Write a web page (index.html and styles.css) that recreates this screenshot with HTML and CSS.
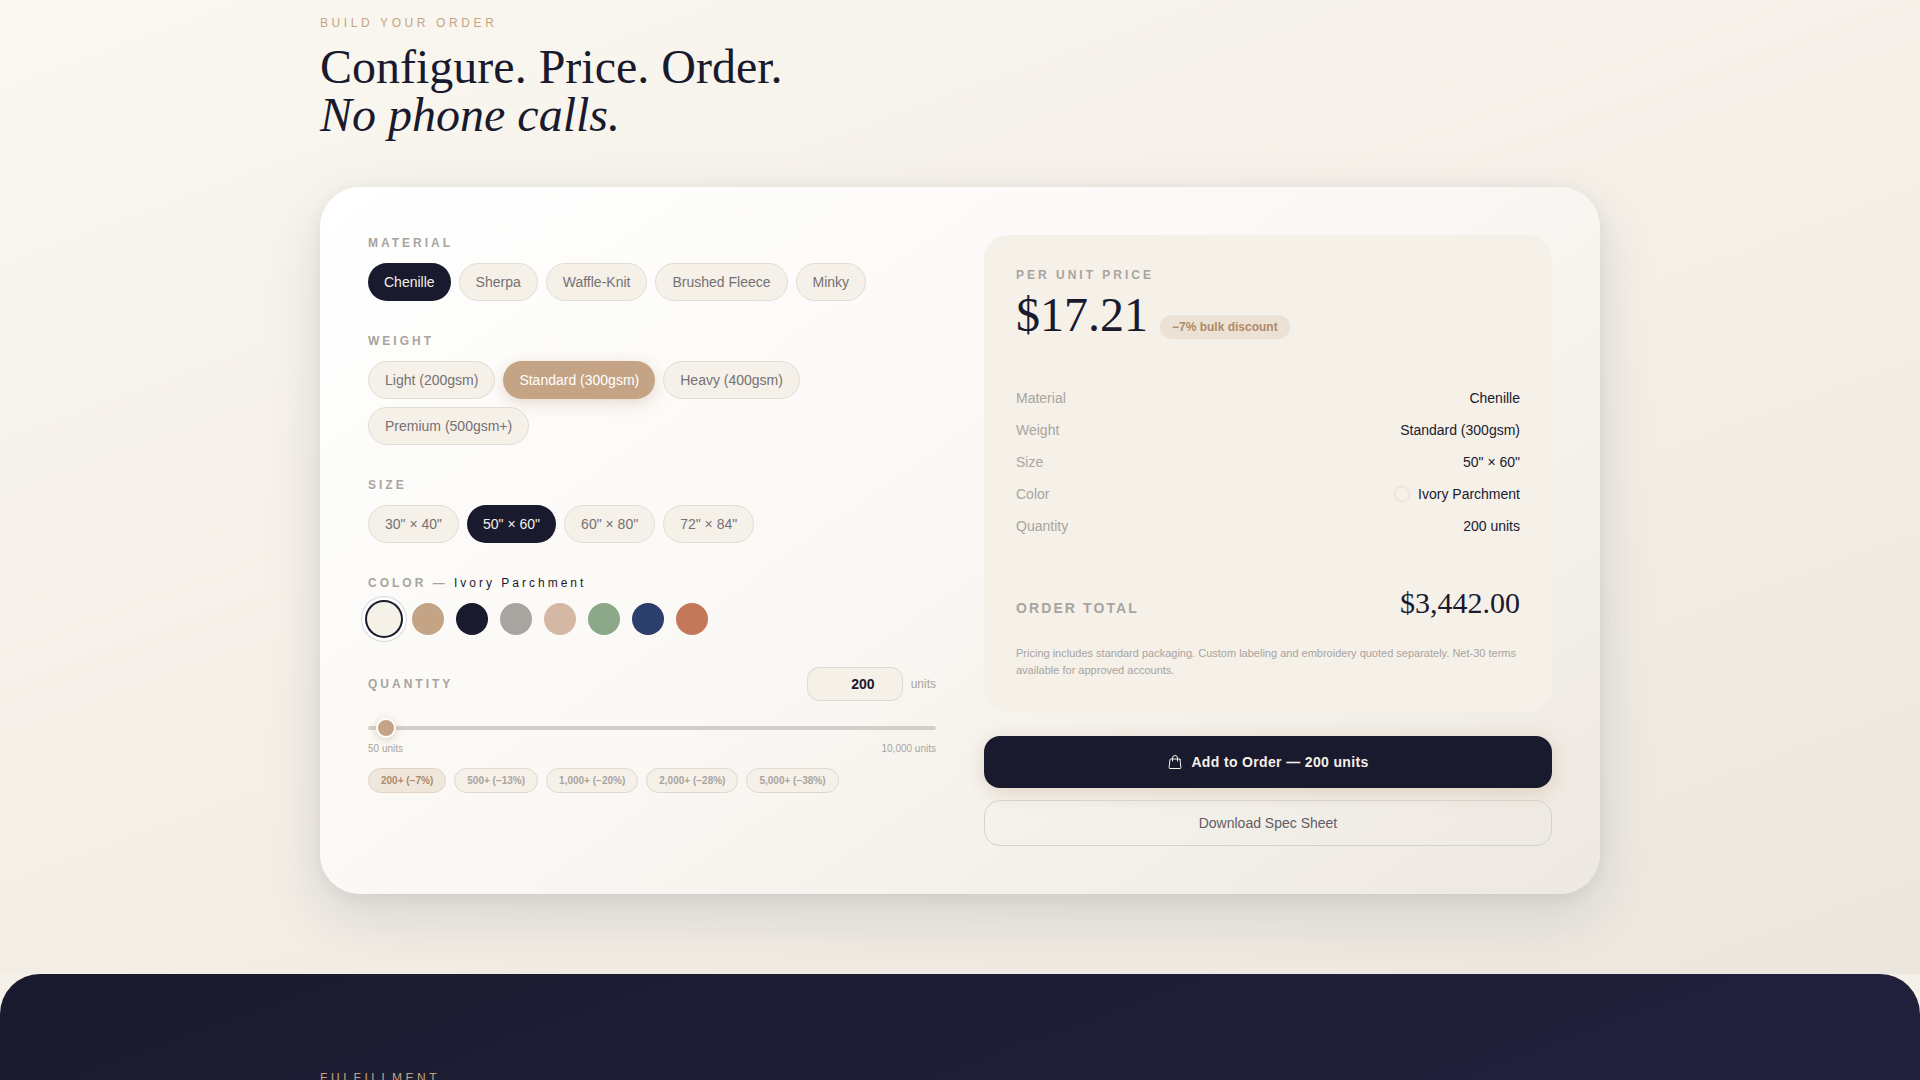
FILE: index.html
```html
<!DOCTYPE html>
<html lang="en">
<head>
  <meta charset="UTF-8">
  <meta name="viewport" content="width=device-width, initial-scale=1.0">
  <title>Build Your Order</title>
  <link rel="stylesheet" href="styles.css">
</head>
<body>
  <section class="builder">
    <div class="container">
      <p class="eyebrow">BUILD YOUR ORDER</p>
      <h2 class="title">Configure. Price. Order.<br><em>No phone calls.</em></h2>

      <div class="card">
        <!-- Options -->
        <div class="options">
          <div class="group">
            <h3 class="label">MATERIAL</h3>
            <div class="chips">
              <button type="button" class="chip dark">Chenille</button>
              <button type="button" class="chip">Sherpa</button>
              <button type="button" class="chip">Waffle-Knit</button>
              <button type="button" class="chip">Brushed Fleece</button>
              <button type="button" class="chip">Minky</button>
            </div>
          </div>

          <div class="group">
            <h3 class="label">WEIGHT</h3>
            <div class="chips">
              <button type="button" class="chip">Light (200gsm)</button>
              <button type="button" class="chip tan">Standard (300gsm)</button>
              <button type="button" class="chip">Heavy (400gsm)</button>
              <button type="button" class="chip">Premium (500gsm+)</button>
            </div>
          </div>

          <div class="group">
            <h3 class="label">SIZE</h3>
            <div class="chips">
              <button type="button" class="chip">30" × 40"</button>
              <button type="button" class="chip dark">50" × 60"</button>
              <button type="button" class="chip">60" × 80"</button>
              <button type="button" class="chip">72" × 84"</button>
            </div>
          </div>

          <div class="group">
            <h3 class="label">COLOR — <span class="label-value">Ivory Parchment</span></h3>
            <div class="swatches">
              <button type="button" class="swatch ivory selected" aria-label="Ivory Parchment"></button>
              <button type="button" class="swatch camel" aria-label="Camel"></button>
              <button type="button" class="swatch midnight" aria-label="Midnight"></button>
              <button type="button" class="swatch stone" aria-label="Stone"></button>
              <button type="button" class="swatch blush" aria-label="Blush"></button>
              <button type="button" class="swatch sage" aria-label="Sage"></button>
              <button type="button" class="swatch navy" aria-label="Navy"></button>
              <button type="button" class="swatch terracotta" aria-label="Terracotta"></button>
            </div>
          </div>

          <div class="group">
            <div class="quantity-row">
              <label class="label" for="quantity">QUANTITY</label>
              <div class="quantity-box">
                <input type="number" id="quantity" class="quantity-input" min="50" max="10000" value="200">
                <span class="units">units</span>
              </div>
            </div>
            <input type="range" class="slider" aria-label="Quantity" min="50" max="10000" step="50" value="200">
            <div class="range-labels">
              <span>50 units</span>
              <span>10,000 units</span>
            </div>
            <div class="tiers">
              <button type="button" class="tier active">200+ (−7%)</button>
              <button type="button" class="tier">500+ (−13%)</button>
              <button type="button" class="tier">1,000+ (−20%)</button>
              <button type="button" class="tier">2,000+ (−28%)</button>
              <button type="button" class="tier">5,000+ (−38%)</button>
            </div>
          </div>
        </div>

        <!-- Price summary -->
        <div class="checkout">
          <div class="summary">
            <h3 class="label">PER UNIT PRICE</h3>
            <div class="price-row">
              <span class="price">$17.21</span>
              <span class="discount">−7% bulk discount</span>
            </div>

            <dl class="details">
              <div class="detail"><dt>Material</dt><dd>Chenille</dd></div>
              <div class="detail"><dt>Weight</dt><dd>Standard (300gsm)</dd></div>
              <div class="detail"><dt>Size</dt><dd>50" × 60"</dd></div>
              <div class="detail"><dt>Color</dt><dd><span class="dot"></span>Ivory Parchment</dd></div>
              <div class="detail"><dt>Quantity</dt><dd>200 units</dd></div>
            </dl>

            <div class="total-row">
              <span class="total-label">ORDER TOTAL</span>
              <span class="total">$3,442.00</span>
            </div>
            <p class="note">Pricing includes standard packaging. Custom labeling and embroidery quoted separately. Net-30 terms available for approved accounts.</p>
          </div>

          <div class="actions">
            <button type="button" class="btn btn-primary">
              <svg width="16" height="16" viewBox="0 0 24 24" fill="none" stroke="currentColor" stroke-width="1.5" stroke-linejoin="round" stroke-linecap="round" aria-hidden="true">
                <path d="M15.75 10.5V6a3.75 3.75 0 1 0-7.5 0v4.5m11.356-1.993 1.263 12c.07.665-.45 1.243-1.119 1.243H4.25a1.125 1.125 0 0 1-1.12-1.243l1.264-12A1.125 1.125 0 0 1 5.513 7.5h12.974c.576 0 1.059.435 1.119 1.007z"/>
              </svg>
              Add to Order — 200 units
            </button>
            <button type="button" class="btn btn-outline">Download Spec Sheet</button>
          </div>
        </div>
      </div>
    </div>
  </section>

  <section class="fulfillment">
    <div class="container">
      <p class="eyebrow">FULFILLMENT</p>
    </div>
  </section>
</body>
</html>
```
FILE: styles.css
```css
* {
  margin: 0;
  padding: 0;
  box-sizing: border-box;
}

body {
  display: flex;
  flex-direction: column;
  height: 100vh;
  overflow: hidden;
  background: #f5f0e8;
  color: #1a1a2e;
  font-family: "Liberation Sans", Arial, sans-serif;
  font-size: 14px;
  line-height: 20px;
}

button,
input {
  font: inherit;
  color: inherit;
}

button {
  border: none;
  cursor: pointer;
}

.container {
  max-width: 1280px;
  margin: 0 auto;
}

/* Builder section */
.builder {
  flex: none;
  padding: 15px 32px 80px;
  background: linear-gradient(160deg, #faf8f1 0%, #f5f0e8 45%, #ebe7df 100%);
}

.eyebrow {
  margin-bottom: 12px;
  font-size: 12px;
  line-height: 16px;
  letter-spacing: 0.3em;
  color: #c4a484;
}

.title {
  margin-bottom: 48px;
  font-family: "Liberation Serif", "Times New Roman", serif;
  font-size: 48px;
  font-weight: 400;
  line-height: 48px;
}

.card {
  display: grid;
  grid-template-columns: 1fr 1fr;
  gap: 48px;
  padding: 48px;
  border-radius: 40px;
  background: linear-gradient(145deg, #ffffff 0%, #faf8f4 50%, #ede8e0 100%);
  box-shadow: 0 20px 60px rgba(26, 26, 46, 0.12), 0 4px 16px rgba(26, 26, 46, 0.06);
}

/* Options */
.options {
  display: flex;
  flex-direction: column;
  gap: 32px;
}

.label {
  font-size: 12px;
  font-weight: 700;
  line-height: 16px;
  letter-spacing: 3px;
  color: #a8a4a0;
}

.label-value {
  font-weight: 400;
  color: #1a1a2e;
}

.chips {
  display: flex;
  flex-wrap: wrap;
  gap: 8px;
  margin-top: 12px;
}

.chip {
  padding: 8px 16px;
  border: 1px solid #e2ddd5;
  border-radius: 19px;
  background: #f5f0e8;
  color: #757173;
}

.chip.dark {
  border: none;
  background: #1a1a2e;
  color: #f5f0e8;
}

.chip.tan {
  border: none;
  background: #c4a484;
  color: #ffffff;
  box-shadow: 0 4px 16px rgba(196, 164, 132, 0.4);
}

/* Color swatches */
.swatches {
  display: flex;
  gap: 12px;
  margin-top: 12px;
}

.swatch {
  width: 32px;
  height: 32px;
  border-radius: 50%;
}

.swatch.selected {
  box-shadow: 0 0 0 1px #f5f0e8, 0 0 0 3px #1a1a2e, 0 0 0 6px #ffffff, 0 0 0 7px #d8d6dc;
}

.ivory { background: #f5f0e8; }
.camel { background: #c4a484; }
.midnight { background: #1a1a2e; }
.stone { background: #a8a4a0; }
.blush { background: #d4b8a4; }
.sage { background: #8ba888; }
.navy { background: #2c3e6b; }
.terracotta { background: #c4785a; }

/* Quantity */
.quantity-row {
  display: flex;
  align-items: center;
  justify-content: space-between;
}

.quantity-box {
  display: flex;
  align-items: center;
  gap: 8px;
}

.quantity-input {
  width: 96px;
  height: 34px;
  padding: 6px 12px;
  border: 1px solid #ddd8d0;
  border-radius: 12px;
  background: #f5f0e8;
  font-weight: 700;
  text-align: right;
}

.units {
  font-size: 12px;
  line-height: 16px;
  color: #a8a4a0;
}

.slider {
  -webkit-appearance: none;
  appearance: none;
  display: block;
  width: 100%;
  height: 4px;
  margin-top: 25px;
  border-radius: 2px;
  background: #d1cfc9;
}

.slider::-webkit-slider-thumb {
  -webkit-appearance: none;
  width: 20px;
  height: 20px;
  border: 2px solid #ffffff;
  border-radius: 50%;
  background: #c4a484;
  box-shadow: 0 2px 8px rgba(196, 164, 132, 0.5);
}

.range-labels {
  display: flex;
  justify-content: space-between;
  margin-top: 11px;
  font-size: 10px;
  line-height: 15px;
  color: #a8a4a0;
}

.tiers {
  display: flex;
  flex-wrap: wrap;
  gap: 8px;
  margin-top: 12px;
}

.tier {
  padding: 4px 12px;
  border: 1px solid #ddd8d0;
  border-radius: 13px;
  background: #f5f0e8;
  font-size: 10px;
  font-weight: 700;
  line-height: 15px;
  color: #a8a4a0;
}

.tier.active {
  border-color: #e2d3c4;
  background: #efe6dc;
  color: #b08968;
}

/* Summary */
.summary {
  padding: 32px 32px 33px;
  border-radius: 24px;
  background: #f5f0e8;
}

.price-row {
  display: flex;
  align-items: flex-end;
  gap: 12px;
  margin-top: 8px;
}

.price {
  font-family: "Liberation Serif", "Times New Roman", serif;
  font-size: 48px;
  line-height: 48px;
}

.discount {
  padding: 4px 12px;
  border-radius: 12px;
  background: #ebe1d4;
  font-size: 12px;
  font-weight: 700;
  line-height: 16px;
  color: #b08968;
}

.details {
  display: flex;
  flex-direction: column;
  gap: 12px;
  margin: 24px 0;
  padding: 24px 0;
  border: solid #f5f0e8;
  border-width: 1px 0;
}

.detail {
  display: flex;
  justify-content: space-between;
}

.detail dt {
  color: #a8a4a0;
}

.detail dd {
  display: flex;
  align-items: center;
  gap: 8px;
}

.dot {
  width: 16px;
  height: 16px;
  border: 1px solid #e2ddd5;
  border-radius: 50%;
  background: #f5f0e8;
}

.total-row {
  display: flex;
  align-items: baseline;
  justify-content: space-between;
}

.total-label {
  font-weight: 700;
  letter-spacing: 0.15em;
  color: #a8a4a0;
}

.total {
  font-family: "Liberation Serif", "Times New Roman", serif;
  font-size: 30px;
  line-height: 36px;
}

.note {
  margin-top: 24px;
  font-size: 11px;
  line-height: 17px;
  color: #a8a4a0;
}

/* Actions */
.actions {
  display: flex;
  flex-direction: column;
  gap: 12px;
  margin-top: 24px;
}

.btn {
  display: flex;
  align-items: center;
  justify-content: center;
  gap: 8px;
  border-radius: 16px;
}

.btn-primary {
  padding: 16px;
  background: #1a1a2e;
  color: #f5f0e8;
  font-weight: 700;
  letter-spacing: 0.025em;
  box-shadow: 0 4px 20px rgba(196, 164, 132, 0.4);
}

.btn-outline {
  padding: 12px;
  border: 1px solid #d5d1cb;
  background: transparent;
  color: #5f5d66;
}

/* Fulfillment section */
.fulfillment {
  flex: 1;
  padding: 96px 32px 0;
  border-radius: 40px 40px 0 0;
  background: linear-gradient(160deg, #1a1a2e 0%, #23223e 100%);
}
```
